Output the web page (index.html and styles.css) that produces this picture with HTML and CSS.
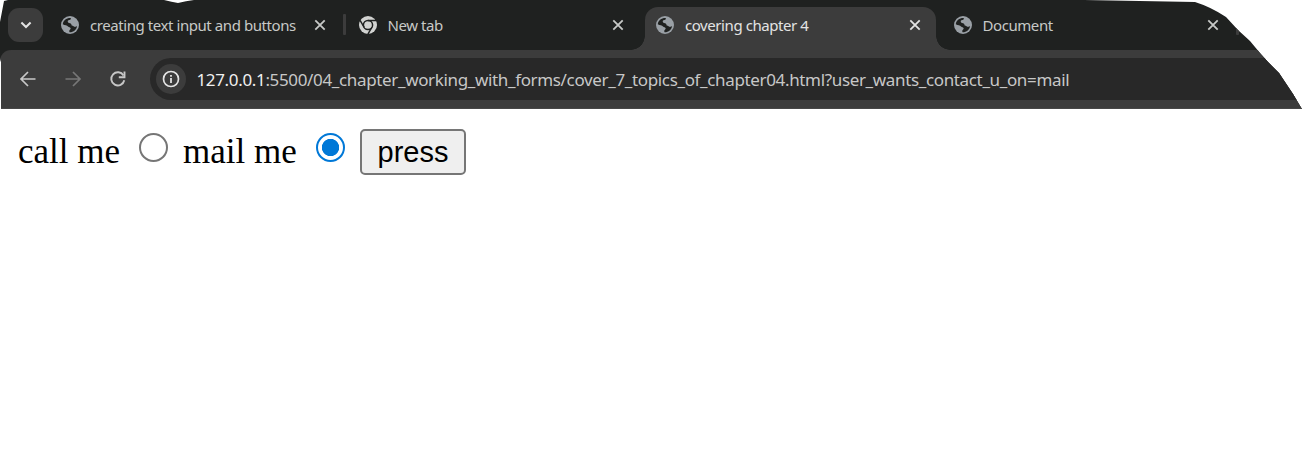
FILE: index.html
```html
<!DOCTYPE html>
<html lang="en">
<head>
<meta charset="utf-8">
<title>covering chapter 4</title>
<link rel="stylesheet" href="styles.css">
</head>
<body>
<svg width="0" height="0" class="defs">
  <symbol id="globe" viewBox="0 0 18 18">
    <circle cx="9" cy="9" r="9" fill="#9aa0a6"/>
    <path fill="#1f2120" d="M1.800 8.300C2 4.500 5.500 1.700 9.800 1.900 10.200 3.500 8.800 4 7.400 4.300 6.300 4.800 6.600 6.800 8 6.900 9.800 6.900 10.500 8 10.700 9.400 12.500 9.600 12.800 10.800 14 10.800 15.200 10.800 15.600 10.200 16.100 9.900 15.600 13.600 12.800 16.100 8.600 16.200 7.500 14.500 9.500 13.800 9.700 12.600 9.500 10.900 7.800 11.400 7 10.400 6.200 9.200 3.800 9.600 1.800 8.300Z"/>
  </symbol>
  <symbol id="chrome" viewBox="0 0 18 18">
    <circle cx="9" cy="9" r="9" fill="#d2d3d1"/>
    <circle cx="9" cy="9" r="4.600" fill="none" stroke="#1f2120" stroke-width="1.500"/>
    <path d="M9 4.500H17M5.100 11.250 1.100 4.320M12.900 11.250 8.900 18.180" fill="none" stroke="#1f2120" stroke-width="1.500"/>
  </symbol>
  <symbol id="cross" viewBox="0 0 12 12">
    <path d="M1.300 1.300 10.700 10.700M10.700 1.300 1.300 10.700" fill="none" stroke="currentColor" stroke-width="1.800"/>
  </symbol>
</svg>
<header class="browser">
  <div class="tabstrip">
    <div class="search-tabs"><svg width="12" height="8" viewBox="0 0 12 8"><path d="M1.400 1.500 6 6 10.600 1.500" fill="none" stroke="#e3e3e3" stroke-width="2"/></svg></div>
    <div class="tab divided"><svg class="favicon"><use href="#globe"/></svg><span class="title">creating text input and buttons</span><svg class="close"><use href="#cross"/></svg></div>
    <div class="tab"><svg class="favicon"><use href="#chrome"/></svg><span class="title">New tab</span><svg class="close"><use href="#cross"/></svg></div>
    <div class="tab active"><svg class="favicon"><use href="#globe"/></svg><span class="title">covering chapter 4</span><svg class="close"><use href="#cross"/></svg></div>
    <div class="tab divided"><svg class="favicon"><use href="#globe"/></svg><span class="title">Document</span><svg class="close"><use href="#cross"/></svg></div>
  </div>
  <div class="toolbar">
    <svg class="nav" viewBox="0 0 18 18"><path d="M16.500 9H2.500M9 2 2 9 9 16" fill="none" stroke="#c7c7c7" stroke-width="1.700"/></svg>
    <svg class="nav" viewBox="0 0 18 18"><path d="M1.500 9H15.500M9 2 16 9 9 16" fill="none" stroke="#777" stroke-width="1.700"/></svg>
    <svg class="nav" viewBox="0 0 18 18"><path d="M15.300 10.300A6.600 6.600 0 1 1 14.500 5.400" fill="none" stroke="#c7c7c7" stroke-width="1.900"/><path d="M15.500 1.500V7.200H9.800" fill="none" stroke="#c7c7c7" stroke-width="1.900"/></svg>
    <div class="address">
      <span class="info"><svg width="18" height="18" viewBox="0 0 18 18"><circle cx="9" cy="9" r="7.500" fill="none" stroke="#e3e3e3" stroke-width="1.700"/><path d="M9 8V13M9 5V6.700" stroke="#e3e3e3" stroke-width="1.800"/></svg></span>
      <span class="url"><span class="host">127.0.0.1</span>:5500/04_chapter_working_with_forms/cover_7_topics_of_chapter04.html?user_wants_contact_u_on=mail</span>
    </div>
  </div>
</header>
<form class="contact">
  <label class="choice" for="call">call me</label>
  <input class="radio" type="radio" id="call" name="contact">
  <label class="choice second" for="mail">mail me</label>
  <input class="radio" type="radio" id="mail" name="contact" checked>
  <button class="press" type="button">press</button>
</form>
</body>
</html>
```
FILE: styles.css
```css
* { box-sizing: border-box; }
body { margin: 0; background: #fff; overflow: hidden; }
svg { display: block; flex: none; }
.defs { position: absolute; }
.browser {
  width: 1307px;
  height: 109px;
  background: #1f2120;
  font-family: "Noto Sans", "Open Sans", sans-serif;
  clip-path: path("M4 1 L8 0 L164 0 Q172 2 178 3 Q186 1 194 0 L1084 0 L1195 2 Q1211 7 1226 17 L1238 30 L1250 41 L1260 53 L1268 62 L1279 73 L1293 94 L1302 109 L1 109 L1 62 L0 58 L0 22 Z");
}
.tabstrip { display: flex; height: 50px; padding: 7px 0 0 8px; }
.search-tabs {
  display: flex;
  align-items: center;
  justify-content: center;
  width: 35px;
  height: 34px;
  margin: 1px 7px 0 0;
  border-radius: 11px;
  background: #3c3c3c;
}
.tab {
  position: relative;
  display: flex;
  flex: none;
  align-items: center;
  width: 291px;
  height: 43px;
  margin-right: 6.5px;
  padding: 0 15px 7px 11px;
  color: #c7c9c7;
}
.divided::after {
  content: "";
  position: absolute;
  left: 293px;
  top: 7px;
  width: 3px;
  height: 21px;
  border-radius: 1px;
  background: #3c3c3c;
}
.active { background: #3c3c3c; border-radius: 13px 13px 0 0; color: #e3e3e3; }
.active::before, .active::after {
  content: "";
  position: absolute;
  bottom: 0;
  width: 14px;
  height: 14px;
}
.active::before { left: -14px; background: radial-gradient(circle at 0 0, transparent 13.5px, #3c3c3c 14px); }
.active::after { right: -14px; background: radial-gradient(circle at 100% 0, transparent 13.5px, #3c3c3c 14px); }
.favicon { width: 18px; height: 18px; }
.title { margin-left: 11px; font-size: 15px; line-height: 20px; letter-spacing: -0.43px; white-space: nowrap; }
.close { width: 12px; height: 12px; margin-left: auto; }
.toolbar {
  display: flex;
  align-items: center;
  gap: 27px;
  height: 59px;
  padding: 0 0 0 18.5px;
  border-bottom: 1px solid #474747;
  border-radius: 11px 0 0 0;
  background: #3c3c3c;
}
.nav { width: 18px; height: 18px; margin-bottom: 1px; }
.address {
  display: flex;
  align-items: center;
  flex: 1;
  height: 42px;
  margin-left: -4px;
  padding-left: 6px;
  border-radius: 21px 0 0 21px;
  background: #282828;
}
.info {
  display: flex;
  align-items: center;
  justify-content: center;
  flex: none;
  width: 30px;
  height: 30px;
  border-radius: 50%;
  background: #3c3c3c;
}
.url { margin: 1px 0 0 11px; color: #c7c7c7; font-size: 17px; letter-spacing: -0.35px; white-space: nowrap; }
.host { color: #f0f0f0; }
.contact { display: flex; align-items: flex-start; padding: 20px 0 0 18px; }
.choice { width: 121px; margin-top: 1px; font: 35px/44px "Liberation Serif", serif; white-space: nowrap; }
.second { margin-left: 15px; width: 133px; }
.radio {
  appearance: none;
  flex: none;
  width: 29px;
  height: 29px;
  margin: 4px 0 0;
  border: 2px solid #767676;
  border-radius: 50%;
}
.radio:checked { border-color: #0078d7; background: radial-gradient(circle, #0078d7 8.3px, transparent 9px); }
.press {
  width: 106px;
  height: 46px;
  margin: 0 0 0 15px;
  padding: 0;
  border: 2px solid #767676;
  border-radius: 5px;
  background: #efefef;
  color: #000;
  font: 29px/42px "Liberation Sans", sans-serif;
}
```
